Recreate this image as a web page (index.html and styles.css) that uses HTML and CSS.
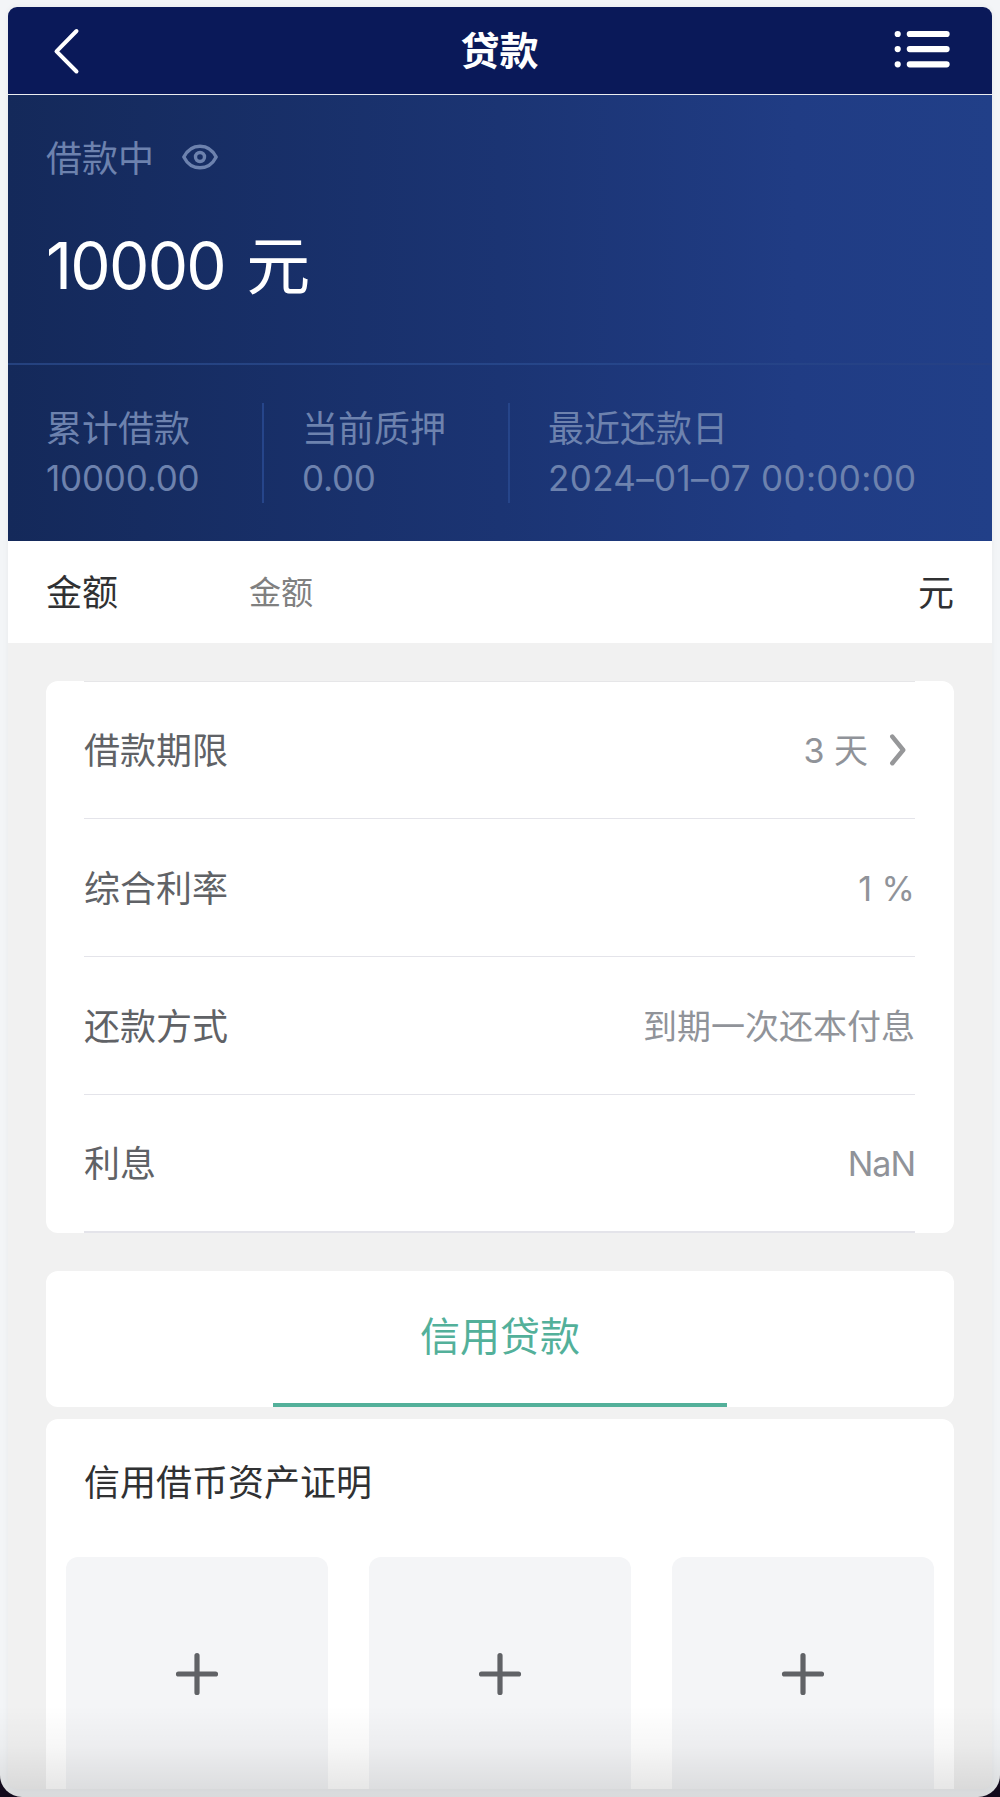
FILE: index.html
```html
<!DOCTYPE html>
<html lang="zh-CN">
<head>
    <meta charset="UTF-8">
    <meta name="viewport" content="width=device-width, initial-scale=1.0">
    <title>贷款</title>
    <link rel="stylesheet" href="styles.css">
</head>
<body>
    <div class="window">
        <div class="page">
            <header class="nav-bar">
                <svg class="back" width="30" height="48" viewBox="0 0 30 48">
                    <path d="M24.5 4 L4.5 24.3 L24.5 44.5"/>
                </svg>
                <h1>贷款</h1>
                <svg class="menu" width="56" height="38" viewBox="0 0 56 38">
                    <path class="dots" d="M3.7 4h0M3.7 19.1h0M3.7 34.3h0"/>
                    <path class="lines" d="M15.8 4h36.8M15.8 19.1h36.8M15.8 34.3h36.8"/>
                </svg>
            </header>

            <section class="summary">
                <div class="total">
                    <div class="total-label">
                        <span>借款中</span>
                        <svg class="eye" width="38" height="28" viewBox="0 0 38 28">
                            <path d="M2.8 14 C10.2 -0.4 27.8 -0.4 35.2 14 C27.8 28.4 10.2 28.4 2.8 14 Z"/>
                            <circle cx="19" cy="14" r="4.5"/>
                        </svg>
                    </div>
                    <div class="total-value">10000 元</div>
                </div>
                <div class="stats">
                    <div class="stat">
                        <p>累计借款</p>
                        <p>10000.00</p>
                    </div>
                    <div class="stat">
                        <p>当前质押</p>
                        <p>0.00</p>
                    </div>
                    <div class="stat date">
                        <p>最近还款日</p>
                        <p>2024–01–07 00:00:00</p>
                    </div>
                </div>
            </section>

            <div class="amount">
                <label for="amount">金额</label>
                <input type="text" id="amount" placeholder="金额">
                <span>元</span>
            </div>

            <main class="content">
                <div class="card info">
                    <div class="cell">
                        <span>借款期限</span>
                        <span class="value">3 天
                            <svg class="arrow" width="20" height="34" viewBox="0 0 20 34">
                                <path d="M4.3 3.6 L15.2 17 L4.3 30.2"/>
                            </svg>
                        </span>
                    </div>
                    <div class="cell">
                        <span>综合利率</span>
                        <span class="value">1 %</span>
                    </div>
                    <div class="cell">
                        <span>还款方式</span>
                        <span class="value">到期一次还本付息</span>
                    </div>
                    <div class="cell">
                        <span>利息</span>
                        <span class="value interest">NaN</span>
                    </div>
                </div>

                <div class="card tabs">
                    <div class="tab active">信用贷款</div>
                </div>

                <div class="card proof">
                    <h2>信用借币资产证明</h2>
                    <div class="uploads">
                        <div class="upload">
                            <svg width="44" height="44" viewBox="0 0 44 44"><path d="M22 3.5v37M3.5 22h37"/></svg>
                        </div>
                        <div class="upload">
                            <svg width="44" height="44" viewBox="0 0 44 44"><path d="M22 3.5v37M3.5 22h37"/></svg>
                        </div>
                        <div class="upload">
                            <svg width="44" height="44" viewBox="0 0 44 44"><path d="M22 3.5v37M3.5 22h37"/></svg>
                        </div>
                    </div>
                </div>
            </main>
        </div>
    </div>
</body>
</html>
```
FILE: styles.css
```css
* {
    box-sizing: border-box;
}
body {
    margin: 0;
    background-color: #120a1c;
    font-family: Inter, 'Noto Sans CJK SC', sans-serif;
    font-size: 36px;
    line-height: 50px;
    color: #303133;
}
h1, h2, p {
    margin: 0;
}
svg {
    fill: none;
    stroke: currentColor;
    stroke-linecap: round;
    stroke-linejoin: round;
    flex-shrink: 0;
}
.window {
    position: relative;
    height: 1797px;
    padding: 7px 8px 8px;
    background-color: #f3f5f7;
    border-radius: 0 0 22px 22px;
    overflow: hidden;
}
/* shade along the bottom of the window */
.window::after {
    content: '';
    position: absolute;
    left: 0;
    right: 0;
    bottom: 0;
    height: 92px;
    background: linear-gradient(to bottom, rgba(0, 0, 0, 0), rgba(0, 0, 0, 0.03) 45%, rgba(0, 0, 0, 0.11));
}
.page {
    height: 1782px;
    background-color: #f1f1f1;
    border-radius: 9px;
    box-shadow: 0 0 6px rgba(0, 0, 0, 0.05);
    overflow: hidden;
}

/* nav bar */
.nav-bar {
    display: flex;
    align-items: center;
    justify-content: space-between;
    height: 88px;
    padding: 0 42px 0 44px;
    background-color: #0a1959;
    border-bottom: 1px solid #ebedf0;
    color: #fff;
}
.nav-bar h1 {
    font-size: 39px;
    font-weight: 700;
    margin-left: 23px;
}
.back {
    stroke-width: 4;
}
.menu {
    stroke-width: 6.2;
    margin-top: -3px;
}

/* summary */
.summary {
    background: linear-gradient(to right, #14295a, #1b3473 50%, #203c84 80%, #213f88);
    color: #6d82ae;
}
.total {
    height: 270px;
    padding: 39px 38px 0;
    border-bottom: 2px solid #26447f;
    border-image: linear-gradient(to right, #25427f, #26468a 60%, #254084) 1;
}
.total-label {
    display: flex;
    align-items: center;
}
.eye {
    margin: -4px 0 0 27px;
    stroke-width: 3.4;
}
.total-value {
    margin-top: 42px;
    font-size: 64px;
    line-height: 80px;
    letter-spacing: -1.7px;
    word-spacing: 5px;
    color: #fff;
}
.stats {
    display: flex;
    height: 176px;
    padding: 38px;
}
.stat {
    width: 246px;
    border-right: 2px solid #26458a;
    white-space: nowrap;
}
.stat:first-child {
    width: 218px;
}
.stat + .stat {
    padding-left: 38px;
}
.stat.date {
    width: auto;
    border-right: none;
}
.stat p:first-child {
    line-height: 52px;
}
.stat p + p {
    font-size: 35px;
    line-height: 46px;
    letter-spacing: -0.2px;
}
.stat.date p + p {
    letter-spacing: 0.35px;
}

/* amount */
.amount {
    display: flex;
    align-items: center;
    height: 102px;
    padding: 2px 38px 0;
    background-color: #fff;
}
.amount label {
    width: 203px;
}
.amount input {
    flex: 1;
    min-width: 0;
    padding: 0;
    border: none;
    outline: none;
    font: inherit;
    font-size: 32px;
}
.amount input::placeholder {
    color: #808080;
}

/* cards */
.content {
    padding: 38px 38px 0;
}
.card {
    background-color: #fff;
    border-radius: 12px;
}
.info {
    height: 552px;
    padding: 0 39px 0 38px;
}
.cell {
    display: flex;
    align-items: center;
    justify-content: space-between;
    height: 138px;
    padding-top: 2px;
    border-bottom: 1px solid #e4e4ea;
    color: #606266;
}
.cell:first-child {
    border-top: 1px solid #e6e6e8;
}
.cell:last-child {
    border-bottom-width: 2px;
}
.value {
    display: flex;
    align-items: center;
    font-size: 34px;
    color: #909399;
}
.interest {
    letter-spacing: -1px;
}
.arrow {
    margin: -2px 7px 0 20px;
    stroke-width: 4.5;
    color: #969799;
}
.tabs {
    display: flex;
    justify-content: center;
    height: 136px;
    margin-top: 38px;
}
.tab {
    width: 50%;
    font-size: 40px;
    line-height: 132px;
    text-align: center;
}
.tab.active {
    color: #53b09a;
    border-bottom: 4px solid #53b09a;
}
.proof {
    height: 400px;
    margin-top: 12px;
    padding: 39px 20px 0;
}
.proof h2 {
    padding-left: 18px;
    font-size: 36px;
    font-weight: 400;
}
.uploads {
    display: flex;
    justify-content: space-between;
    margin-top: 49px;
}
.upload {
    display: flex;
    align-items: center;
    justify-content: center;
    width: 262px;
    height: 234px;
    border-radius: 12px 12px 0 0;
    background-color: #f4f5f7;
    color: #606266;
}
.upload svg {
    stroke-width: 5.2;
}
```
